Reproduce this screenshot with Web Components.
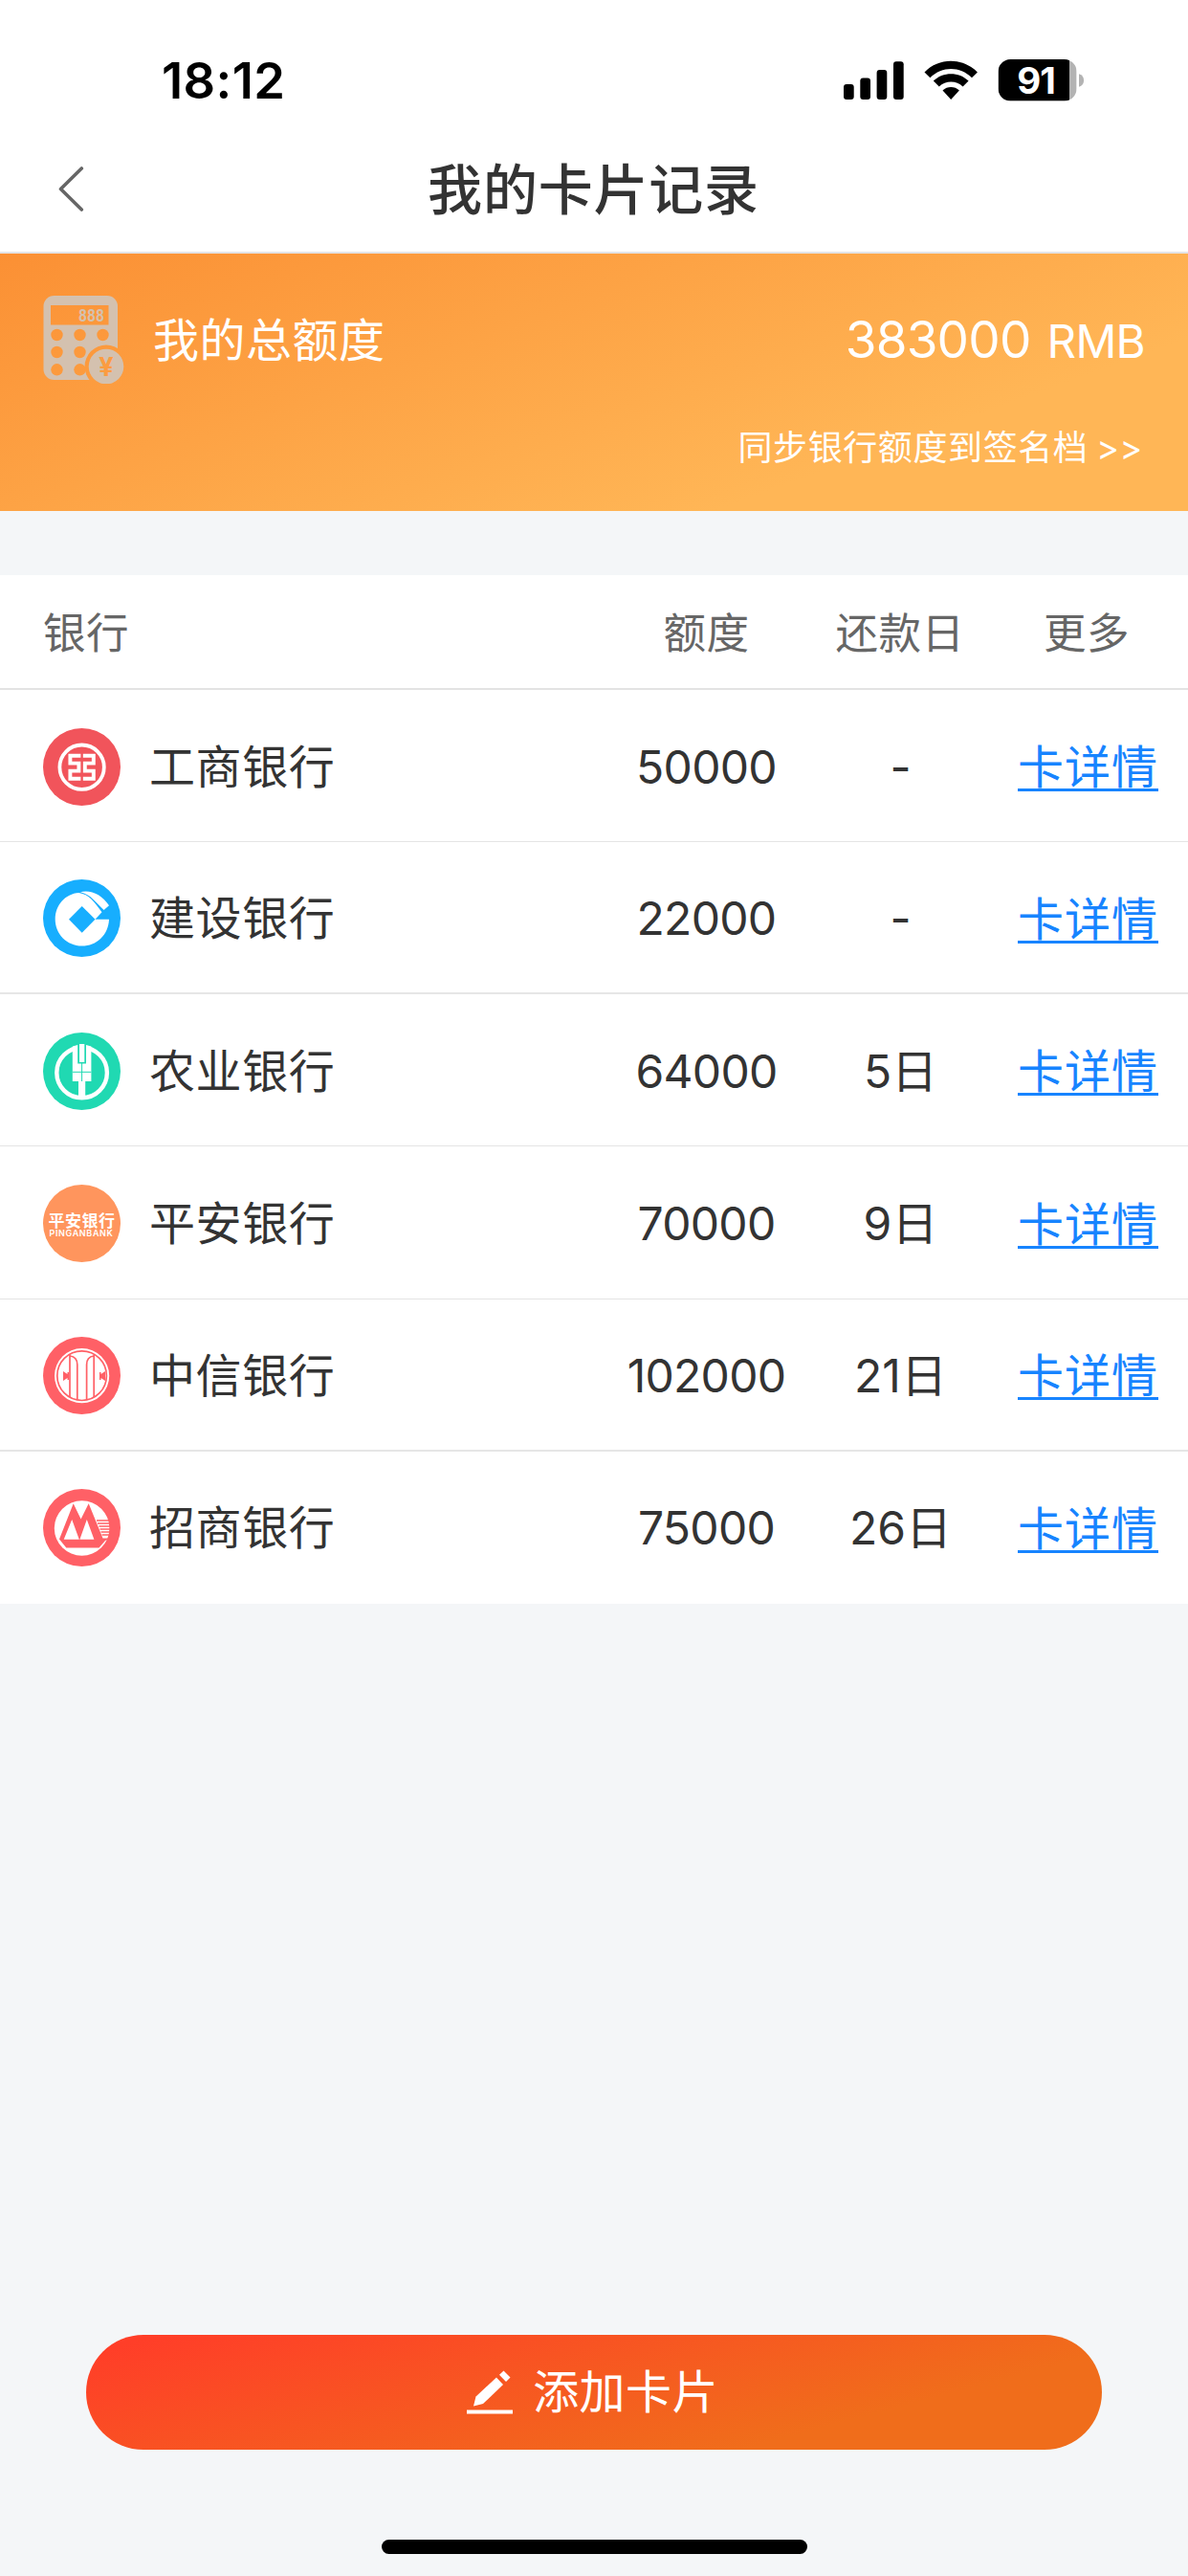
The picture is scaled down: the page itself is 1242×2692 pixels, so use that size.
<!DOCTYPE html>
<html lang="zh-CN">
<head>
<meta charset="utf-8">
<title>我的卡片记录</title>
<style>
    html, body {
        margin: 0;
        padding: 0;
    }

    body {
        width: 1242px;
        height: 2692px;
        background: #f4f6f8;
        color: #333;
        font-family: Inter, "Noto Sans CJK SC", sans-serif;
        font-size: 48px;
        line-height: 58px;
    }
</style>
</head>
<body>

<card-page>
    <status-bar slot="top" time="18:12" battery="91"></status-bar>
    <nav-bar slot="top">我的卡片记录</nav-bar>

    <quota-banner amount="383000" unit="RMB">
        我的总额度
        <span slot="link">同步银行额度到签名档 &gt;&gt;</span>
    </quota-banner>

    <card-table>
        <card-row bank="icbc" amount="50000" day="-">工商银行</card-row>
        <card-row bank="ccb" amount="22000" day="-" class="thick">建设银行</card-row>
        <card-row bank="abc" amount="64000" day="5日">农业银行</card-row>
        <card-row bank="pingan" amount="70000" day="9日">平安银行</card-row>
        <card-row bank="citic" amount="102000" day="21日" class="thick">中信银行</card-row>
        <card-row bank="cmb" amount="75000" day="26日">招商银行</card-row>
    </card-table>

    <add-button slot="bottom">添加卡片</add-button>
</card-page>

<script>
(function() {
    "use strict";

    const LOGOS = {
        icbc: `
            <circle cx="40.5" cy="40.5" r="40.5" fill="#f1545b"/>
            <g fill="none" stroke="#fff">
                <circle cx="40.6" cy="40.7" r="23.2" stroke-width="3.8"/>
                <path stroke-width="3.9" d="M39.4 28.8H28.4V36.6H37.4V44.6H28.4V52.8H39.4M41.8 28.8H52.8V36.6H43.8V44.6H52.8V52.8H41.8"/>
            </g>`,
        ccb: `
            <circle cx="40.5" cy="40.5" r="40.5" fill="#17aefe"/>
            <path fill="#fff" d="M37.5 14C23 15 12.7 27 12.7 41.7C12.7 57 25 69.5 40.7 69.5C56 69.5 68.4 58 69 41.7H54.5L61.5 34.3C54 24 48 15.5 37.5 14Z"/>
            <path fill="#fff" d="M39 13.2C50 10.5 61.5 16 69 27.3L63.6 32C56 25 50 15.5 39 13.2Z"/>
            <path fill="#17aefe" d="M40.7 28L54.5 41.7L40.7 55.7L27 41.7Z"/>`,
        abc: `
            <circle cx="40.5" cy="40.5" r="40.5" fill="#20d9b2"/>
            <circle cx="40.6" cy="42" r="26.3" fill="none" stroke="#fff" stroke-width="4.4"/>
            <path fill="#20d9b2" d="M34.5 10H46.8V34H34.5Z"/>
            <path fill="#fff" d="M30.8 14.5L36.2 13V32.5H45V13L50.4 14.5V51H44.2V68H37V51H30.8Z"/>
            <path fill="#fff" d="M38 12H43.3V31H38Z"/>
            <path fill="none" stroke="#20d9b2" stroke-width="1" d="M40.6 32V51M30.8 41.3H50.4"/>`,
        pingan: `
            <circle cx="40.5" cy="40.5" r="40.5" fill="#ff955d"/>
            <g fill="#fff">
                <text x="5.5" y="43.8" font-size="17" font-weight="700" textLength="70" font-family="Noto Sans CJK SC, sans-serif">平安银行</text>
                <text x="6.5" y="54.2" font-size="8.4" font-weight="600" textLength="67" lengthAdjust="spacingAndGlyphs" font-family="Inter, sans-serif">PINGANBANK</text>
            </g>`,
        citic: `
            <circle cx="40.5" cy="40.5" r="40.5" fill="#ff6066"/>
            <circle cx="40.6" cy="40.7" r="28.6" fill="#fff"/>
            <g fill="none" stroke="#ff6066" stroke-width="1.7">
                <circle cx="40.6" cy="40.7" r="25.8"/>
                <path d="M28 19V63M28 20Q35.8 21 35.8 29V65.5M53.2 19V63M53.2 20Q45.6 21 45.6 29V65.5"/>
            </g>
            <path fill="#ff6066" d="M21 36L25.5 39V37H27V45H25.5V43L21 46ZM65 36L60.5 39V37H59V45H60.5V43L65 46Z"/>`,
        cmb: `
            <circle cx="40.5" cy="40.5" r="40.5" fill="#ff6066"/>
            <circle cx="40.6" cy="41" r="28.8" fill="#fff"/>
            <path fill="#ff6066" d="M31.7 15.3L39.6 31.5L47.7 15.3L62.5 51.5H70L65 54L58.5 61.5H24.3L17 52.5Z"/>
            <path fill="#fff" d="M30.2 32L37.8 52.8H21.7ZM45.8 32L53.4 52.8H38.4Z"/>
            <path fill="none" stroke="#ff6066" stroke-width="1.4" d="M56 33H70M57 36H70M58.5 39H70M59.5 42H70M60.5 45H70M61.5 48H70"/>`
    };

    function define(name, html, setup){
        var template = document.createElement("template");
        template.innerHTML = html;

        customElements.define(name, class extends HTMLElement {
            constructor(){
                super();

                this._shadow = this.attachShadow({mode: "open"});
                this._shadow.appendChild(template.content.cloneNode(true));
            }

            connectedCallback(){
                if(setup) {
                    setup(this, this._shadow);
                }
            }
        });
    }

    // copies attributes of the host into the elements marked with data-attr
    function fill(host, root){
        root.querySelectorAll("[data-attr]").forEach(function(el){
            el.textContent = host.getAttribute(el.dataset.attr);
        });
    }


    define("card-page", `
        <style>
            :host {
                display: flex;
                flex-direction: column;
                height: 2692px;
                overflow: hidden;
            }

            .top {
                background: #fff;
                height: 263px;
                border-bottom: 2px solid #e3e3e5;
            }

            main {
                flex: 1;
            }

            footer {
                display: flex;
                flex-direction: column;
                align-items: center;
                padding-bottom: 23px;
            }

            .home {
                width: 445px;
                height: 15px;
                margin-top: 94px;
                border-radius: 8px;
                background: #000;
            }
        </style>
        <div class="top"><slot name="top"></slot></div>
        <main><slot></slot></main>
        <footer>
            <slot name="bottom"></slot>
            <div class="home"></div>
        </footer>
    `);


    define("status-bar", `
        <style>
            :host {
                display: flex;
                justify-content: space-between;
                align-items: center;
                box-sizing: border-box;
                height: 134px;
                padding: 33px 108px 0 169px;
                color: #000;
            }

            .time {
                font-size: 52.5px;
                font-weight: 600;
                letter-spacing: 0.4px;
            }

            svg {
                display: block;
            }
        </style>
        <span class="time" data-attr="time"></span>
        <svg width="252" height="44" viewBox="0 0 252 44">
            <rect x="0" y="26" width="10.7" height="16" rx="3"/>
            <rect x="17.3" y="19.5" width="10.7" height="22.5" rx="3"/>
            <rect x="34.6" y="11" width="10.7" height="31" rx="3"/>
            <rect x="52" y="2.3" width="10.7" height="39.7" rx="3"/>
            <path d="M84.5 13.5C99.5 -2.2 124.5 -2.2 139.9 13.5L134 19.2C121.5 7 103 7 90.4 19.2Z"/>
            <path d="M93.8 22.5C103.8 12.7 120.6 12.7 130.6 22.5L124.6 28.4C118 22 106.5 22 99.8 28.4Z"/>
            <path d="M103.5 32.5C108.5 27.9 115.9 27.9 120.9 32.5L112.2 42Z"/>
            <clipPath id="cell"><rect x="161.6" y="0" width="82" height="43.5" rx="13"/></clipPath>
            <g clip-path="url(#cell)">
                <rect x="161.6" width="82" height="43.5" fill="#b3b3b3"/>
                <rect x="161.6" width="74.4" height="43.5"/>
            </g>
            <path fill="#b3b3b3" d="M246 15.3C252.8 17 252.8 27 246 28.7Z"/>
            <text data-attr="battery" x="201" y="36" fill="#fff" text-anchor="middle" font-size="38.5" font-weight="700" letter-spacing="-1"></text>
        </svg>
    `, fill);


    define("nav-bar", `
        <style>
            :host {
                display: grid;
                grid-template-columns: 150px 1fr 150px;
                align-items: center;
                height: 128px;
            }

            svg {
                display: block;
                margin-left: 60px;
            }

            h1 {
                margin: 2px 1px 0 0;
                font-size: 57px;
                font-weight: 500;
                line-height: 80px;
                letter-spacing: 0.8px;
                text-align: center;
            }
        </style>
        <svg width="30" height="48" viewBox="0 0 30 48" fill="none" stroke="#666" stroke-width="3.6" stroke-linecap="round" stroke-linejoin="round">
            <path d="M25.3 2L3.5 23.5L25.3 45"/>
        </svg>
        <h1><slot></slot></h1>
    `);


    define("quota-banner", `
        <style>
            :host {
                display: block;
                box-sizing: border-box;
                height: 269px;
                padding: 44px 45px 0 45px;
                background: linear-gradient(160deg, #fb9034, #ffb656 75%);
                color: #fff;
            }

            .row {
                display: flex;
                align-items: center;
                height: 92px;
            }

            .label {
                flex: 1;
                margin: 2px 0 0 29px;
                letter-spacing: 0.5px;
            }

            .amount {
                display: flex;
                align-items: baseline;
                gap: 17px;
                margin-top: 1px;
                font-size: 47.5px;
                letter-spacing: -0.7px;
            }

            .amount b {
                font-size: 53px;
                font-weight: 400;
                letter-spacing: -0.8px;
            }

            .link {
                margin-top: 41px;
                padding-right: 2px;
                font-size: 36px;
                line-height: 52px;
                letter-spacing: 0.6px;
                word-spacing: -2px;
                text-align: right;
            }
        </style>
        <div class="row">
            <svg width="86" height="92" viewBox="0 0 86 92" fill="#d4c1af">
                <mask id="holes" fill="#000">
                    <rect width="86" height="92" fill="#fff"/>
                    <rect x="8" y="10" width="60.5" height="20.5"/>
                    <circle cx="14.5" cy="41" r="6.2"/><circle cx="38.5" cy="41" r="6.2"/><circle cx="62.5" cy="41" r="6.2"/>
                    <circle cx="14.5" cy="59" r="6.2"/><circle cx="38.5" cy="59" r="6.2"/>
                    <circle cx="14.5" cy="77.3" r="6.2"/><circle cx="38.5" cy="77.3" r="6.2"/>
                    <circle cx="66" cy="74" r="22.5"/>
                </mask>
                <rect x="0.5" width="77.5" height="88" rx="11" mask="url(#holes)"/>
                <text x="37" y="27" font-size="19.5" font-weight="700" textLength="27" lengthAdjust="spacingAndGlyphs" font-family="Liberation Mono, monospace">888</text>
                <circle cx="66" cy="74" r="18.3"/>
                <text x="66" y="83.5" fill="#fb9c41" font-size="27" font-weight="700" text-anchor="middle" font-family="Inter, sans-serif">¥</text>
            </svg>
            <span class="label"><slot></slot></span>
            <span class="amount"><b data-attr="amount"></b><span data-attr="unit"></span></span>
        </div>
        <div class="link"><slot name="link"></slot></div>
    `, fill);


    define("card-table", `
        <style>
            :host {
                display: block;
                margin-top: 67px;
                background: #fff;
            }

            .head {
                display: grid;
                grid-template-columns: 636px 205px 200px 1fr;
                align-items: center;
                box-sizing: border-box;
                height: 120px;
                padding-top: 3px;
                border-bottom: 2px solid #e3e3e3;
                color: #666;
                font-size: 44.5px;
                letter-spacing: 0.5px;
                text-align: center;
            }

            .head :first-child {
                padding-left: 45px;
                text-align: left;
            }

            .head :last-child {
                padding-right: 11px;
            }
        </style>
        <div class="head">
            <span>银行</span><span>额度</span><span>还款日</span><span>更多</span>
        </div>
        <slot></slot>
    `);


    define("card-row", `
        <style>
            :host {
                display: grid;
                grid-template-columns: 636px 205px 201px 1fr;
                align-items: center;
                box-sizing: border-box;
                height: 159.17px;
                padding-top: 2px;
                border-bottom: 1px solid #e4e4e4;
                text-align: center;
            }

            :host(.thick) {
                border-bottom: 2px solid #e6e6e6;
            }

            :host(:last-child) {
                border-bottom-color: transparent;
            }

            .bank {
                display: flex;
                align-items: center;
                gap: 30px;
                padding-left: 45px;
                letter-spacing: 0.6px;
            }

            .bank span, .amount, .day {
                padding-top: 1px;
            }

            .amount {
                letter-spacing: -0.7px;
            }

            a {
                justify-self: center;
                margin: 4px 9px 0 0;
                color: #1784ff;
                letter-spacing: 1px;
                line-height: 45px;
                border-bottom: 3px solid #1784ff;
            }
        </style>
        <div class="bank">
            <svg class="logo" width="81" height="81" viewBox="0 0 81 81"></svg>
            <span><slot></slot></span>
        </div>
        <span class="amount" data-attr="amount"></span>
        <span class="day" data-attr="day"></span>
        <a>卡详情</a>
    `, function(host, root){
        fill(host, root);
        root.querySelector(".logo").innerHTML = LOGOS[host.getAttribute("bank")];
    });


    define("add-button", `
        <style>
            :host {
                display: flex;
                align-items: center;
                justify-content: center;
                gap: 21px;
                box-sizing: border-box;
                width: 1062px;
                height: 120px;
                padding-right: 3px;
                border-radius: 60px;
                background: linear-gradient(165deg, #ff3e28 5%, #f06d1b 75%);
                color: #fff;
                letter-spacing: 0.4px;
            }
        </style>
        <svg width="48" height="46" viewBox="0 0 48 46" fill="#fff">
            <rect y="41.5" width="48" height="4"/>
            <path d="M7 37.5L9.5 27.5L31 7.5L38 15L17 35Z"/>
            <path d="M34 4.8L38.5 0.5L45.5 7.5L41 12Z"/>
        </svg>
        <span><slot></slot></span>
    `);

}) ();
</script>
</body>
</html>
